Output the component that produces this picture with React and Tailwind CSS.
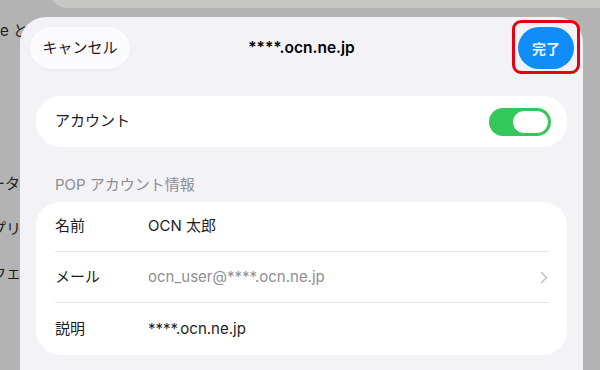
export default function App() {
  const font = { fontFamily: 'Inter, "Noto Sans CJK JP", sans-serif' };
  return (
    <div className="relative w-[600px] h-[370px] overflow-hidden bg-[#b2b3b2]" style={font}>
      {/* background content */}
      <div className="absolute left-[48px] right-0 top-[-20px] h-[28px] rounded-bl-[20px] bg-[#c6c7c5]" />
      <div className="flex flex-col w-[40px] text-[15px] text-[#1f1f1f] whitespace-nowrap pt-[20px]">
        <div className="flex h-[22px] items-center">e と</div>
        <div className="flex h-[22px] items-center mt-[131px] -ml-[10px]">ータ・</div>
        <div className="flex h-[22px] items-center mt-[23px] -ml-[9px]">プリ</div>
        <div className="flex h-[22px] items-center mt-[22px] -ml-[9px]">ウェ.</div>
      </div>

      {/* sheet */}
      <div className="absolute left-[20px] top-[17px] w-[563px] h-[380px] rounded-t-[26px] bg-[#f2f2f7] px-[16px]">
        <div className="relative -mx-[16px] flex items-start justify-between h-[52px] pt-[10px] pl-[10px] pr-[9px]">
          <div className="flex items-center justify-center w-[100px] h-[42px] rounded-full bg-[#fbfbfd] text-[15px] text-[#1c1c1e] shadow-[0_1px_4px_rgba(0,0,0,0.04)]">
            キャンセル
          </div>
          <div className="absolute left-0 right-0 top-[10px] h-[42px] flex items-center justify-center text-[15.5px] font-semibold text-black pointer-events-none">
            ****.ocn.ne.jp
          </div>
          <div className="flex items-center justify-center w-[56px] h-[42px] rounded-full bg-[#0f8cf7] text-[14px] font-semibold text-[#e6f3ff]">
            完了
          </div>
        </div>

        <div className="mt-[27px] flex items-center justify-between h-[51px] rounded-[24px] bg-white pl-[19px] pr-[16px]">
          <span className="text-[15px] text-[#1c1c1e]">アカウント</span>
          <div className="flex items-center w-[62px] h-[28px] rounded-full bg-[#34c759] justify-end pr-[2px]">
            <div className="w-[37px] h-[24px] rounded-full bg-white border border-[#2fc35a]" />
          </div>
        </div>

        <div className="mt-[26px] pl-[19px] text-[15px] text-[#8e8e93] h-[24px] flex items-center">
          POP アカウント情報
        </div>

        <div className="mt-[5px] rounded-[24px] bg-white pl-[19px] pr-[18px]">
          <div className="flex items-center h-[50px] border-b border-[#e5e5ea] text-[15px]">
            <span className="w-[93px] text-[#1c1c1e]">名前</span>
            <span className="text-[#1c1c1e]">OCN 太郎</span>
          </div>
          <div className="flex items-center h-[51px] border-b border-[#e5e5ea] text-[15px]">
            <span className="w-[93px] text-[#1c1c1e]">メール</span>
            <span className="flex-1 text-[#8e8e93]">ocn_user@****.ocn.ne.jp</span>
            <svg width="8" height="13" viewBox="0 0 8 13" className="mr-[1px]">
              <path d="M1.5 1.5 L6.5 6.5 L1.5 11.5" fill="none" stroke="#c4c4c7" strokeWidth="1.6" strokeLinecap="round" strokeLinejoin="round" />
            </svg>
          </div>
          <div className="flex items-center h-[52px] text-[15px]">
            <span className="w-[93px] text-[#1c1c1e]">説明</span>
            <span className="text-[#1c1c1e]">****.ocn.ne.jp</span>
          </div>
        </div>
      </div>

      {/* red annotation box */}
      <div className="absolute left-[512px] top-[20px] w-[68px] h-[54px] rounded-[9px] border-[3px] border-[#e60012]" />
    </div>
  );
}
